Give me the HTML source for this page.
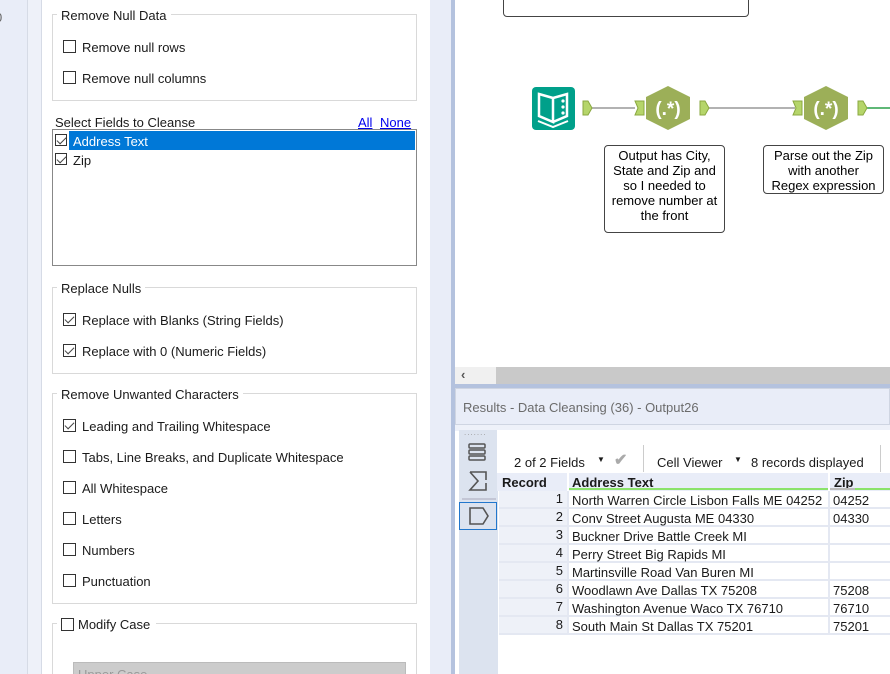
<!DOCTYPE html>
<html style="overflow:hidden;width:890px;height:674px"><head><meta charset="utf-8"><style>
*{margin:0;padding:0;box-sizing:border-box}
body{width:890px;height:674px;overflow:hidden;position:relative;background:#fff;font-family:"Liberation Sans",sans-serif;font-size:13px;color:#1a1a1a}
.a{position:absolute}
.gb{position:absolute;border:1px solid #d9d9d9}
.lg{position:absolute;background:#fff;padding:0 4px;white-space:nowrap}
.cb{position:absolute;width:13px;height:13px;border:1px solid #333;background:#fff}
.cb.c::after{content:"";position:absolute;left:3px;top:0px;width:4px;height:8px;border:solid #444;border-width:0 1.5px 1.5px 0;transform:rotate(45deg)}
.t{position:absolute;white-space:nowrap}
.cm{position:absolute;border:1px solid #444;border-radius:4px;background:#fff;text-align:center;font-size:13px;line-height:15px;color:#000;overflow:hidden}
.row{position:absolute;left:499px;width:391px;height:18px;border-bottom:2px solid #e4e8f2}
.row .r{position:absolute;left:0;width:68px;text-align:right;padding-right:4px;background:#eef1f8;height:16px;top:0}
.row .ad{position:absolute;left:73px;top:2px}
.row .z{position:absolute;left:334px;top:2px}
.row .s1{position:absolute;left:68px;width:2px;height:18px;background:#e4e8f2;top:0}
.row .s2{position:absolute;left:329px;width:2px;height:18px;background:#e4e8f2;top:0}
</style></head><body>
<div class="a" style="left:0;top:0;width:27px;height:674px;background:#e9edf8"></div>
<div class="a" style="left:27px;top:0;width:1px;height:674px;background:#d6dbe6"></div>
<div class="a" style="left:28px;top:0;width:13px;height:674px;background:#eef1f9"></div>
<div class="a" style="left:41px;top:0;width:1px;height:674px;background:#d6dbe6"></div>
<div class="t" style="left:-5px;top:10px;color:#666">0</div>
<div class="a" style="left:430px;top:0;width:21px;height:674px;background:#e9edf8"></div>
<div class="a" style="left:451px;top:0;width:4px;height:674px;background:#b4c2de"></div>

<div class="gb" style="left:52px;top:14px;width:365px;height:87px"></div>
<div class="lg" style="left:57px;top:8px">Remove Null Data</div>
<div class="cb" style="left:63px;top:40px"></div><div class="t" style="left:82px;top:40px">Remove null rows</div>
<div class="cb" style="left:63px;top:71px"></div><div class="t" style="left:82px;top:71px">Remove null columns</div>

<div class="t" style="left:55px;top:115px">Select Fields to Cleanse</div>
<div class="t" style="left:358px;top:115px;color:#0000ee;text-decoration:underline">All</div>
<div class="t" style="left:380px;top:115px;color:#0000ee;text-decoration:underline">None</div>
<div class="a" style="left:52px;top:129px;width:365px;height:137px;border:1px solid #888"></div>
<div class="a" style="left:69px;top:131px;width:346px;height:19px;background:#0078d7"></div>
<div class="cb c" style="left:55px;top:134px;width:12px;height:12px"></div><div class="t" style="left:73px;top:134px;color:#fff">Address Text</div>
<div class="cb c" style="left:55px;top:153px;width:12px;height:12px"></div><div class="t" style="left:73px;top:153px">Zip</div>

<div class="gb" style="left:52px;top:287px;width:365px;height:87px"></div>
<div class="lg" style="left:57px;top:281px">Replace Nulls</div>
<div class="cb c" style="left:63px;top:313px"></div><div class="t" style="left:82px;top:313px">Replace with Blanks (String Fields)</div>
<div class="cb c" style="left:63px;top:344px"></div><div class="t" style="left:82px;top:344px">Replace with 0 (Numeric Fields)</div>

<div class="gb" style="left:52px;top:393px;width:365px;height:211px"></div>
<div class="lg" style="left:57px;top:387px">Remove Unwanted Characters</div>
<div class="cb c" style="left:63px;top:419px"></div><div class="t" style="left:82px;top:419px">Leading and Trailing Whitespace</div>
<div class="cb" style="left:63px;top:450px"></div><div class="t" style="left:82px;top:450px">Tabs, Line Breaks, and Duplicate Whitespace</div>
<div class="cb" style="left:63px;top:481px"></div><div class="t" style="left:82px;top:481px">All Whitespace</div>
<div class="cb" style="left:63px;top:512px"></div><div class="t" style="left:82px;top:512px">Letters</div>
<div class="cb" style="left:63px;top:543px"></div><div class="t" style="left:82px;top:543px">Numbers</div>
<div class="cb" style="left:63px;top:574px"></div><div class="t" style="left:82px;top:574px">Punctuation</div>

<div class="gb" style="left:52px;top:623px;width:365px;height:60px"></div>
<div class="lg" style="left:57px;top:617px;padding-right:6px"><span style="display:inline-block;width:13px;height:13px;border:1px solid #333;vertical-align:-2px;margin-right:4px"></span>Modify Case</div>
<div class="a" style="left:73px;top:662px;width:333px;height:20px;background:#cccccc;border:1px solid #bbb"></div>
<div class="t" style="left:78px;top:667px;color:#999">Upper Case</div>

<div class="a" style="left:503px;top:-5px;width:246px;height:22px;border:1px solid #444;border-radius:4px"></div>
<svg class="a" style="left:455px;top:0" width="435" height="367">
 <line x1="137" y1="108" x2="180" y2="108" stroke="#999" stroke-width="1.5"/>
 <line x1="254" y1="108" x2="340" y2="108" stroke="#999" stroke-width="1.5"/>
 <line x1="412" y1="108" x2="435" y2="108" stroke="#2aa04a" stroke-width="1.5"/>
 <rect x="77" y="87" width="43" height="43" rx="4" fill="#00a08a"/>
 <path d="M84 94 L98 98 L98 122 L84 116 Z M98 98 L112 94 L112 116 L98 122" fill="none" stroke="#fff" stroke-width="2.5"/>
 <circle cx="108" cy="101" r="1.6" fill="#fff"/><circle cx="108" cy="107" r="1.6" fill="#fff"/><circle cx="108" cy="113" r="1.6" fill="#fff"/>
 <path d="M83 121 L98 127 L113 121" fill="none" stroke="#fff" stroke-width="2"/>
 <path d="M128 101 h5 l4 7 l-4 7 h-5 z" fill="#b5d56a" stroke="#8aa840"/>
 <path d="M180 101 h9 v14 h-9 l3 -7 z" fill="#b5d56a" stroke="#8aa840"/>
 <path d="M213 86 L235 97 L235 119 L213 130 L191 119 L191 97 Z" fill="#9caf58"/>
 <text x="213" y="115" text-anchor="middle" fill="#fff" font-weight="bold" font-size="19" font-family="Liberation Sans">(.*)</text>
 <path d="M245 101 h5 l4 7 l-4 7 h-5 z" fill="#b5d56a" stroke="#8aa840"/>
 <path d="M338 101 h9 v14 h-9 l3 -7 z" fill="#b5d56a" stroke="#8aa840"/>
 <path d="M371 86 L393 97 L393 119 L371 130 L349 119 L349 97 Z" fill="#9caf58"/>
 <text x="371" y="115" text-anchor="middle" fill="#fff" font-weight="bold" font-size="19" font-family="Liberation Sans">(.*)</text>
 <path d="M403 101 h5 l4 7 l-4 7 h-5 z" fill="#b5d56a" stroke="#8aa840"/>
</svg>
<div class="cm" style="left:604px;top:145px;width:121px;height:88px;padding-top:2px">Output has City,<br>State and Zip and<br>so I needed to<br>remove number at<br>the front</div>
<div class="cm" style="left:763px;top:145px;width:121px;height:49px;padding-top:2px">Parse out the Zip<br>with another<br>Regex expression</div>

<div class="a" style="left:455px;top:367px;width:41px;height:17px;background:#f0f0f0"></div>
<div class="t" style="left:461px;top:367px;color:#555;font-weight:bold">&#8249;</div>
<div class="a" style="left:496px;top:367px;width:394px;height:17px;background:#c9c9c9"></div>
<div class="a" style="left:455px;top:384px;width:435px;height:4px;background:#b4c2de"></div>
<div class="a" style="left:455px;top:388px;width:435px;height:37px;background:#e9edf8;border:1px solid #cfd5e2"></div>
<div class="t" style="left:463px;top:400px;color:#6b6b6b">Results - Data Cleansing (36) - Output26</div>
<div class="a" style="left:455px;top:425px;width:435px;height:6px;background:#eef1f9"></div>
<div class="a" style="left:459px;top:430px;width:39px;height:244px;background:#dce3ef"></div>
<div class="t" style="left:464px;top:428px;color:#999;font-size:8px;letter-spacing:1px">.......</div>
<svg class="a" style="left:459px;top:440px" width="39" height="90">
 <rect x="10" y="4" width="16" height="4" rx="1" fill="none" stroke="#555" stroke-width="1.5"/>
 <rect x="10" y="10" width="16" height="4" rx="1" fill="none" stroke="#555" stroke-width="1.5"/>
 <rect x="10" y="16" width="16" height="4" rx="1" fill="none" stroke="#555" stroke-width="1.5"/>
 <path d="M11 32 H27 V40 M11 32 L19 41 L11 50 H27 V43" fill="none" stroke="#555" stroke-width="1.6"/>
 <line x1="3" y1="59" x2="37" y2="59" stroke="#aab" />
 <rect x="0.5" y="62.5" width="37" height="27" fill="none" stroke="#2277cc"/>
 <path d="M11 68 H24 L29 76 L24 84 H11 Z" fill="none" stroke="#555" stroke-width="1.6"/>
</svg>
<div class="a" style="left:497px;top:430px;width:393px;height:44px;background:#fff"></div>
<div class="t" style="left:514px;top:455px">2 of 2 Fields</div>
<div class="t" style="left:597px;top:455px;font-size:8px">&#9660;</div>
<div class="t" style="left:614px;top:450px;color:#aaa;font-size:16px;font-weight:bold">&#10004;</div>
<div class="a" style="left:643px;top:445px;width:1px;height:27px;background:#ccc"></div>
<div class="t" style="left:657px;top:455px">Cell Viewer</div>
<div class="t" style="left:734px;top:455px;font-size:8px">&#9660;</div>
<div class="t" style="left:751px;top:455px">8 records displayed</div>
<div class="a" style="left:880px;top:445px;width:1px;height:27px;background:#ccc"></div>
<div class="a" style="left:497px;top:473px;width:393px;height:18px;background:#e9edf8"></div>
<div class="t" style="left:502px;top:475px;font-weight:bold">Record</div>
<div class="a" style="left:567px;top:473px;width:2px;height:18px;background:#fff"></div>
<div class="t" style="left:572px;top:475px;font-weight:bold">Address Text</div>
<div class="a" style="left:569px;top:488px;width:259px;height:2px;background:#8be36a"></div>
<div class="a" style="left:828px;top:473px;width:2px;height:18px;background:#fff"></div>
<div class="t" style="left:834px;top:475px;font-weight:bold">Zip</div>
<div class="a" style="left:830px;top:488px;width:25px;height:2px;background:#bbb"></div>
<div class="a" style="left:855px;top:488px;width:35px;height:2px;background:#8be36a"></div>
<div class="row" style="top:491px"><div class="r">1</div><div class="s1"></div><div class="ad">North Warren Circle Lisbon Falls ME 04252</div><div class="s2"></div><div class="z">04252</div></div>
<div class="row" style="top:509px"><div class="r">2</div><div class="s1"></div><div class="ad">Conv Street Augusta ME 04330</div><div class="s2"></div><div class="z">04330</div></div>
<div class="row" style="top:527px"><div class="r">3</div><div class="s1"></div><div class="ad">Buckner Drive Battle Creek MI</div><div class="s2"></div></div>
<div class="row" style="top:545px"><div class="r">4</div><div class="s1"></div><div class="ad">Perry Street Big Rapids MI</div><div class="s2"></div></div>
<div class="row" style="top:563px"><div class="r">5</div><div class="s1"></div><div class="ad">Martinsville Road Van Buren MI</div><div class="s2"></div></div>
<div class="row" style="top:581px"><div class="r">6</div><div class="s1"></div><div class="ad">Woodlawn Ave Dallas TX 75208</div><div class="s2"></div><div class="z">75208</div></div>
<div class="row" style="top:599px"><div class="r">7</div><div class="s1"></div><div class="ad">Washington Avenue Waco TX 76710</div><div class="s2"></div><div class="z">76710</div></div>
<div class="row" style="top:617px"><div class="r">8</div><div class="s1"></div><div class="ad">South Main St Dallas TX 75201</div><div class="s2"></div><div class="z">75201</div></div>
</body></html>
